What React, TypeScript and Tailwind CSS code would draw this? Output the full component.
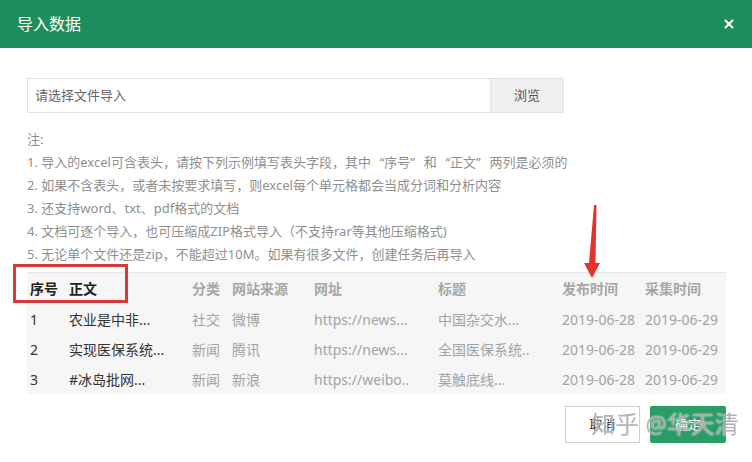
import { X } from 'lucide-react';

const columns = ['序号', '正文', '分类', '网站来源', '网址', '标题', '发布时间', '采集时间'];

const rows = [
  ['1', '农业是中非...', '社交', '微博', 'https://news...', '中国杂交水...', '2019-06-28', '2019-06-29'],
  ['2', '实现医保系统...', '新闻', '腾讯', 'https://news...', '全国医保系统..', '2019-06-28', '2019-06-29'],
  ['3', '#冰岛批网...', '新闻', '新浪', 'https://weibo..', '莫触底线...', '2019-06-28', '2019-06-29'],
];

// full-width quote mark, as the original font draws it
function Q({ c }: { c: string }) {
  return <span className={`inline-block w-[10px] ${c === '“' ? 'text-right' : 'text-left'}`}>{c}</span>;
}

const grid = 'grid grid-cols-[39px_123px_40px_82px_124px_124px_83px_1fr] pl-[3px] items-center';

export default function App() {
  return (
    <div
      className="relative w-[752px] h-[462px] bg-white overflow-hidden"
      style={{ fontFamily: '"Noto Sans", "Noto Sans CJK SC", sans-serif' }}
    >
      {/* Header */}
      <div className="h-[48px] bg-[#1e8e5e] flex items-center justify-between pl-[17px] pr-[16px]">
        <span className="text-white text-[16px]">导入数据</span>
        <X className="w-[14px] h-[14px] text-white" strokeWidth={3.5} />
      </div>

      <div className="px-[27px] pt-[30px]">
        {/* File picker */}
        <div className="flex h-[35px]">
          <div className="w-[464px] border border-[#e3e3e3] flex items-center px-[7px] text-[13px] text-[#666]">
            请选择文件导入
          </div>
          <button className="w-[73px] bg-[#efefef] border border-[#e3e3e3] border-l-0 text-[13px] text-[#555]">
            浏览
          </button>
        </div>

        {/* Notes */}
        <div className="mt-[15px] text-[13px] leading-[23px] text-[#8f8f8f]">
          <div>注:</div>
          <div>
            1. 导入的excel可含表头，请按下列示例填写表头字段，其中 <Q c="“" />序号<Q c="”" /> 和 <Q c="“" />正文<Q c="”" /> 两列是必须的
          </div>
          <div>2. 如果不含表头，或者未按要求填写，则excel每个单元格都会当成分词和分析内容</div>
          <div>3. 还支持word、txt、pdf格式的文档</div>
          <div>4. 文档可逐个导入，也可压缩成ZIP格式导入（不支持rar等其他压缩格式)</div>
          <div>5. 无论单个文件还是zip，不能超过10M。如果有很多文件，创建任务后再导入</div>
        </div>

        {/* Sample table */}
        <div className="mt-[6px] w-[699px] bg-[#f6f6f6] border-t border-[#e6e6e6] text-[14px]">
          <div className={`${grid} h-[31px] font-bold`}>
            {columns.map((c, i) => (
              <span key={c} className={i < 2 ? 'text-[#222]' : 'text-[#a6a6a6]'}>
                {c}
              </span>
            ))}
          </div>
          {rows.map((r) => (
            <div key={r[0]} className={`${grid} h-[30px]`}>
              {r.map((cell, i) => (
                <span key={i} className={`whitespace-nowrap ${i < 2 ? 'text-[#333]' : 'text-[#a3a3a3]'}`}>
                  {cell}
                </span>
              ))}
            </div>
          ))}
        </div>

        {/* Footer */}
        <div className="flex justify-end gap-[10px] mt-[12px] w-[699px]">
          <button className="w-[75px] h-[37px] border border-[#d0d0d0] bg-white text-[13px] text-[#222]">
            取消
          </button>
          <button className="w-[76px] h-[37px] rounded-[2px] bg-[#2a9c68] text-[13px] text-white">
            确定
          </button>
        </div>
      </div>

      {/* Annotation: red box */}
      <div className="absolute left-[13px] top-[264px] w-[115px] h-[39px] border-[3px] border-[#d9393b]" />

      {/* Annotation: red arrow */}
      <svg className="absolute left-[580px] top-[200px]" width="25" height="82" viewBox="0 0 25 82">
        <polygon points="14,5 16.5,5 15.5,63 20,63 12,78 4,63 9,63" fill="#e5302c" />
      </svg>

      {/* Watermark */}
      <div
        className="absolute left-[591px] top-[408px] text-[24px] leading-[32px] text-[#a0a0a0]/80 whitespace-nowrap"
        style={{ textShadow: '0 0 2px #fff' }}
      >
        知乎 @华天清
      </div>
    </div>
  );
}
